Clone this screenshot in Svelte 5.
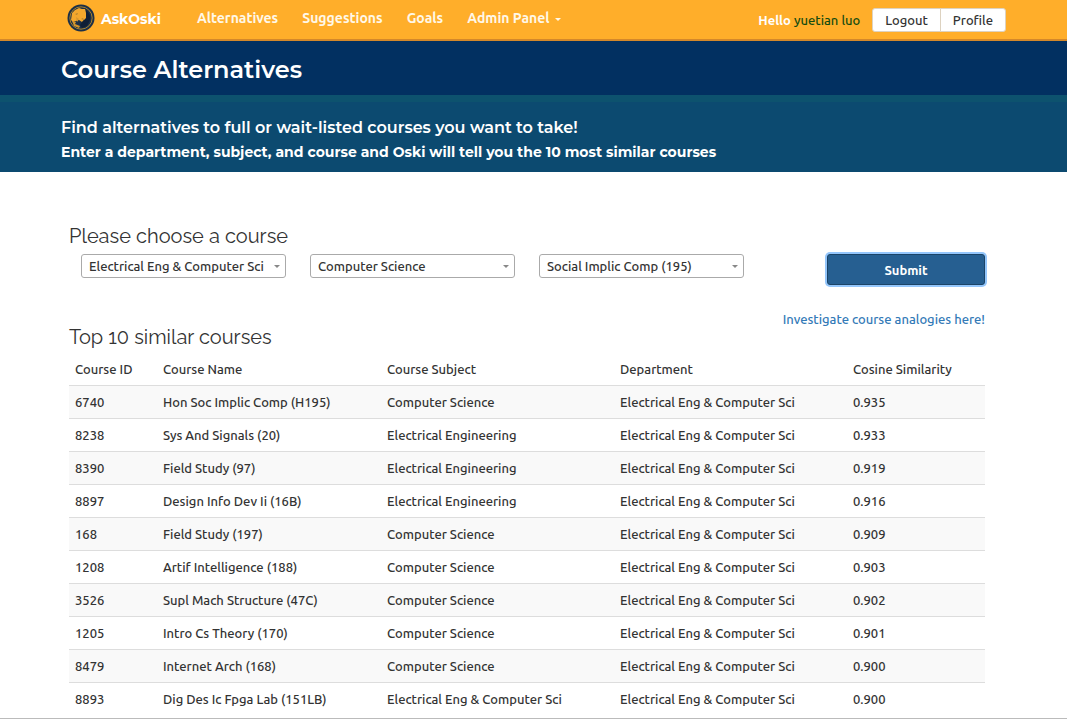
<script>
  let department = "Electrical Eng & Computer Sci";
  let subject = "Computer Science";
  let course = "Social Implic Comp (195)";

  const user = "yuetian luo";
  const cs = "Computer Science";
  const ee = "Electrical Engineering";
  const eecs = "Electrical Eng & Computer Sci";

  const similar = [
    { id: 6740, name: "Hon Soc Implic Comp (H195)", subject: cs, score: 0.935 },
    { id: 8238, name: "Sys And Signals (20)", subject: ee, score: 0.933 },
    { id: 8390, name: "Field Study (97)", subject: ee, score: 0.919 },
    { id: 8897, name: "Design Info Dev Ii (16B)", subject: ee, score: 0.916 },
    { id: 168, name: "Field Study (197)", subject: cs, score: 0.909 },
    { id: 1208, name: "Artif Intelligence (188)", subject: cs, score: 0.903 },
    { id: 3526, name: "Supl Mach Structure (47C)", subject: cs, score: 0.902 },
    { id: 1205, name: "Intro Cs Theory (170)", subject: cs, score: 0.901 },
    { id: 8479, name: "Internet Arch (168)", subject: cs, score: 0.9 },
    { id: 8893, name: "Dig Des Ic Fpga Lab (151LB)", subject: eecs, score: 0.9 },
  ];
</script>

<header>
  <a class="brand" href="#/">
    <svg width="28" height="28" viewBox="0 0 28 28" aria-hidden="true">
      <circle cx="14" cy="14" r="13.5" fill="#1d3047" />
      <circle cx="14" cy="14" r="11.2" fill="none" stroke="#a8822f" stroke-width="1" />
      <path
        d="M5 9l3-3 4-2 3 1 3 0 1 4 1 4-1 6-2-3-2 2-3-2-3 1-3 1-2-2z"
        fill="#f3a72d"
      />
      <path d="M19 6q5 4 4 10l-3 6-5 2-2-3 3-4 3-3z" fill="#101f36" />
      <path d="M5 17l4 1-1 2 5 2-1 2-5-2zM9 13l3 2-2 3z" fill="#d4952d" />
      <path d="M8 10l3-1-1 2zM14 15l2-1 1 2z" fill="#b07f2c" />
    </svg>
    <span>AskOski</span>
  </a>
  <nav>
    <a href="#/alternatives">Alternatives</a>
    <a href="#/suggestions">Suggestions</a>
    <a href="#/goals">Goals</a>
    <button class="menu">Admin Panel <i class="caret"></i></button>
  </nav>
  <div class="account">
    <span class="hello">Hello <b>{user}</b></span>
    <div class="group">
      <button>Logout</button>
      <button>Profile</button>
    </div>
  </div>
</header>

<div class="title">
  <h1>Course Alternatives</h1>
</div>
<div class="intro">
  <p class="lead">Find alternatives to full or wait-listed courses you want to take!</p>
  <p>Enter a department, subject, and course and Oski will tell you the 10 most similar courses</p>
</div>

<main>
  <h2>Please choose a course</h2>
  <form on:submit|preventDefault>
    <label class="pick">
      <select aria-label="Department" bind:value={department}>
        <option>Electrical Eng & Computer Sci</option>
      </select>
      <i class="caret"></i>
    </label>
    <label class="pick">
      <select aria-label="Subject" bind:value={subject}>
        <option>Computer Science</option>
        <option>Electrical Engineering</option>
      </select>
      <i class="caret"></i>
    </label>
    <label class="pick">
      <select aria-label="Course" bind:value={course}>
        <option>Social Implic Comp (195)</option>
      </select>
      <i class="caret"></i>
    </label>
    <button class="submit">Submit</button>
  </form>
  <a class="analogies" href="#/analogies">Investigate course analogies here!</a>

  <h2>Top 10 similar courses</h2>
  <table>
    <thead>
      <tr>
        <th class="id">Course ID</th>
        <th class="name">Course Name</th>
        <th class="wide">Course Subject</th>
        <th class="wide">Department</th>
        <th>Cosine Similarity</th>
      </tr>
    </thead>
    <tbody>
      {#each similar as row (row.id)}
        <tr>
          <td>{row.id}</td>
          <td>{row.name}</td>
          <td>{row.subject}</td>
          <td>{eecs}</td>
          <td>{row.score.toFixed(3)}</td>
        </tr>
      {/each}
    </tbody>
  </table>
</main>
<footer></footer>

<style>
  :global(body) {
    background: #fff;
    color: #333;
    font: 500 13px/16px Ubuntu, "Noto Sans", sans-serif;
  }
  button,
  select {
    font: inherit;
    color: inherit;
    cursor: pointer;
  }
  a {
    text-decoration: none;
  }
  header {
    display: flex;
    align-items: flex-start;
    box-sizing: border-box;
    height: 41px;
    padding: 0 61px 0 67px;
    background: #ffae2a;
    border-bottom: 2px solid #d4882a;
  }
  .brand {
    display: flex;
    align-items: center;
    gap: 6px;
    padding-top: 4px;
    color: #fff;
    font: 700 14px/20px Montserrat, "Noto Sans", sans-serif;
  }
  .brand span {
    padding-top: 2px;
  }
  nav {
    display: flex;
    gap: 24px;
    padding: 8px 0 0 36px;
    font-size: 14px;
    font-weight: 700;
    line-height: 20px;
  }
  nav a,
  .menu {
    padding: 0;
    border: 0;
    background: none;
    color: #fff8e8;
  }
  .caret {
    display: inline-block;
    border: 3px solid transparent;
    border-top-color: currentColor;
    border-bottom: 0;
    vertical-align: middle;
  }
  .menu .caret {
    margin-left: 2px;
  }
  .account {
    display: flex;
    align-items: center;
    gap: 12px;
    margin-left: auto;
    padding-top: 8px;
  }
  .hello {
    color: #fff;
    font-weight: 700;
  }
  .hello b {
    color: #144c10;
    font-weight: 500;
  }
  .group {
    display: flex;
  }
  .group button {
    height: 24px;
    padding: 0 12px;
    border: 1px solid #ddd2c0;
    border-radius: 3px 0 0 3px;
    background: #fff;
  }
  .group button + button {
    margin-left: -1px;
    border-radius: 0 3px 3px 0;
  }
  .title {
    padding: 13px 61px 9px;
    background: #023061;
  }
  h1 {
    margin: 0;
    color: #fff;
    font: 600 24px/32px Montserrat, Inter, sans-serif;
  }
  .intro {
    padding: 14px 61px 8px;
    border-top: 7px solid #0d526e;
    background: #0c4a70;
    color: #fff;
    font: 700 14px/24px Montserrat, Inter, sans-serif;
  }
  .intro p {
    margin: 0;
  }
  .intro .lead {
    font-size: 16px;
    font-weight: 600;
  }
  main {
    padding: 52px 82px 0 69px;
  }
  h2 {
    margin: 0;
    font: 400 20px/24px Raleway, Lato, sans-serif;
  }
  form {
    display: grid;
    grid-template-columns: repeat(4, 1fr);
    align-items: start;
    padding-top: 6px;
  }
  .pick {
    display: grid;
    align-items: center;
    padding: 0 12px;
  }
  .pick select {
    grid-area: 1 / 1;
    width: 100%;
    height: 24px;
    padding: 0 18px 0 7px;
    border: 1px solid #aaa;
    border-radius: 3px;
    background: #fff;
    appearance: none;
  }
  .pick .caret {
    grid-area: 1 / 1;
    justify-self: end;
    margin-right: 6px;
    color: #888;
    pointer-events: none;
  }
  .submit {
    justify-self: end;
    width: 158px;
    height: 31px;
    border: 1px solid #1b4467;
    border-radius: 3px;
    background: #265f91;
    box-shadow: 0 0 0 2px #94c6fb;
    color: #fff;
    font-weight: 700;
  }
  .analogies {
    display: block;
    padding: 26px 0 0;
    color: #337ab7;
    text-align: right;
  }
  .analogies + h2 {
    margin-top: -2px;
  }
  table {
    width: 100%;
    margin-top: 4px;
    border-collapse: collapse;
    table-layout: fixed;
  }
  th,
  td {
    padding: 8px 6px;
    text-align: left;
    font-weight: 500;
  }
  td {
    border-top: 1px solid #ddd;
  }
  .id {
    width: 76px;
  }
  .name {
    width: 212px;
  }
  .wide {
    width: 221px;
  }
  tbody tr:nth-child(odd) {
    background: #f9f9f9;
  }
  footer {
    margin-top: 3px;
    border-top: 1px solid #bbb;
  }
</style>
